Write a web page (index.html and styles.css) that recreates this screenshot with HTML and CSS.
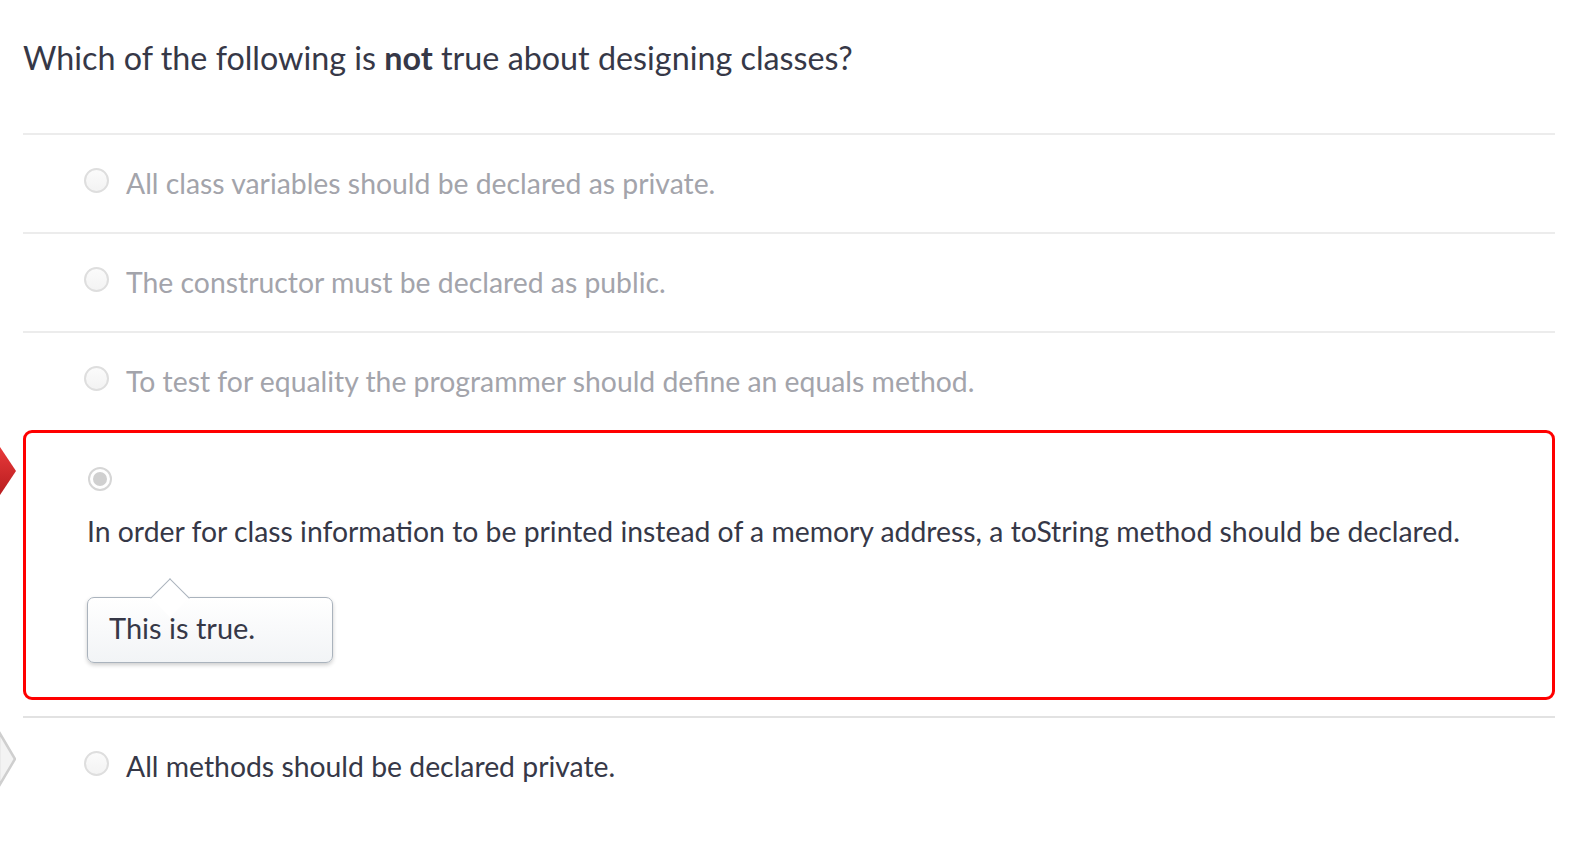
FILE: index.html
```html
<!DOCTYPE html>
<html>
<head>
<meta charset="utf-8">
<link rel="stylesheet" href="styles.css">
</head>
<body>
<div class="marker marker-red">
  <svg width="16" height="60" viewBox="0 0 16 60"><defs><linearGradient id="rg" x1="0" y1="0" x2="0" y2="1"><stop offset="0" stop-color="#e8393a"/><stop offset="1" stop-color="#b81d1f"/></linearGradient></defs><polygon points="0,6 16,30 0,54" fill="url(#rg)"/></svg>
</div>
<div class="marker marker-grey">
  <svg width="16" height="60" viewBox="0 0 16 60"><polygon points="-1,3 15,30 -1,57" fill="#f3f3f3" stroke="#cfcfcf" stroke-width="2.5"/></svg>
</div>
<div class="quiz">
  <h1 class="question">Which of the following is <strong>not</strong> true about designing classes?</h1>
  <div class="answers">
    <div class="answer muted"><span class="radio"></span><span class="label">All class variables should be declared as private.</span></div>
    <div class="answer muted"><span class="radio"></span><span class="label">The constructor must be declared as public.</span></div>
    <div class="answer muted"><span class="radio"></span><span class="label">To test for equality the programmer should define an equals method.</span></div>
    <div class="answer selected">
      <span class="radio checked"></span>
      <div class="label">In order for class information to be printed instead of a memory address, a toString method should be declared.</div>
      <div class="comment">This is true.</div>
    </div>
    <div class="answer last"><span class="radio"></span><span class="label">All methods should be declared private.</span></div>
  </div>
</div>
</body>
</html>
```
FILE: styles.css
```css
* { box-sizing: border-box; }
html, body { margin: 0; padding: 0; background: #fff; }
body {
  font-family: Lato, "Open Sans", sans-serif;
  color: #363847;
  width: 1586px;
  height: 848px;
  overflow: hidden;
  position: relative;
}
.quiz {
  padding: 0 31px 0 23px;
}
.question {
  font-size: 32.3px;
  font-weight: 400;
  line-height: 40px;
  margin: 0;
  padding-top: 38px;
  height: 133px;
}
.question strong { font-weight: 700; }
.answer {
  display: flex;
  align-items: center;
  border-top: 2px solid #ececec;
  height: 99px;
  padding-left: 61px;
  padding-bottom: 1px;
}
.answer .label {
  font-size: 28.35px;
  line-height: 34px;
  margin-left: 17px;
}
.answer.muted .label { color: #a3a4ab; }
.radio {
  width: 25px;
  height: 25px;
  border-radius: 50%;
  border: 2px solid #dedede;
  background: linear-gradient(#fbfbfb, #f3f3f3);
  flex: none;
  margin-top: -6px;
}
.radio.checked {
  width: 24px;
  height: 24px;
  border: 2px solid #d6d6d6;
  background: #fff;
  display: block;
  margin: 0 0 0 1px;
}
.radio.checked::after {
  content: "";
  display: block;
  width: 14px;
  height: 14px;
  border-radius: 50%;
  background: #d0d0d0;
  margin: 3px;
}
.answer.selected {
  display: block;
  height: 270px;
  border: 3px solid #ff0000;
  border-radius: 9px;
  padding: 34px 0 0 61px;
  margin-bottom: 16px;
}
.answer.selected .label {
  margin: 23px 0 0 0;
}
.comment {
  position: relative;
  margin-top: 49px;
  width: 246px;
  height: 66px;
  border: 1.5px solid #aab3bd;
  border-radius: 7px;
  background: linear-gradient(#ffffff, #f2f4f6);
  box-shadow: 0 2px 4px rgba(0,0,0,0.2);
  font-size: 29px;
  line-height: 60px;
  padding-left: 21px;
}
.comment::before {
  content: "";
  position: absolute;
  left: 68px;
  top: -14px;
  width: 27px;
  height: 27px;
  background: #fff;
  border-top: 1.5px solid #aab3bd;
  border-left: 1.5px solid #aab3bd;
  transform: rotate(45deg);
}
.answer.last {
  border-top-color: #e2e2e2;
}
.marker {
  position: absolute;
  left: 0;
}
.marker svg { display: block; }
.marker-red { top: 441px; }
.marker-grey { top: 729px; }
```
